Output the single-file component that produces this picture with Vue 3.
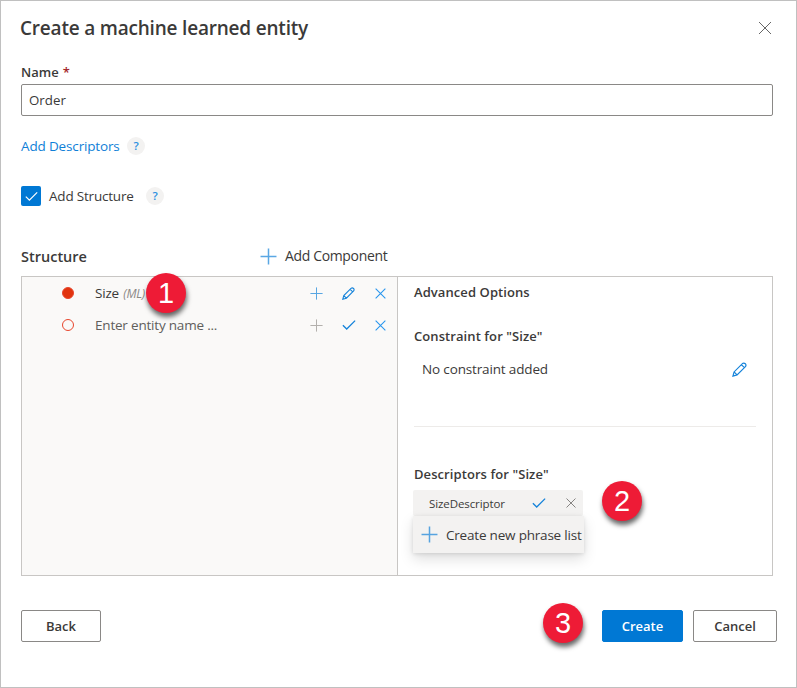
<script setup>
import { ref, h } from 'vue'

const name = ref('Order')
const paths = {
  plus: 'M8 0.5V15.5M0.5 8H15.5',
  close: 'M2 2L14 14M14 2L2 14',
  check: 'M1 8.2L5.4 12.6L15 3',
  edit: 'M1 15L2.2 10.6L11.1 1.7Q12.7 .5 14.2 1.8Q15.5 3.3 14.3 4.9L5.4 13.8ZM10 2.8L13.2 6M2.2 10.6L5.4 13.8',
}
const Icon = (props) =>
  h(
    'svg',
    { viewBox: '0 0 16 16', width: props.size, height: props.size, fill: 'none', stroke: 'currentColor', 'stroke-width': (props.weight * 16) / props.size },
    [h('path', { d: paths[props.name] })],
  )
Icon.props = { name: String, size: { type: Number, default: 12 }, weight: { type: Number, default: 1 } }
</script>

<template>
  <main class="dialog">
    <header class="head">
      <h1 class="title">Create a machine learned entity</h1>
      <button class="ico dark"><Icon name="close" :size="16" :weight="0.9" /></button>
    </header>

    <label class="label" for="entity"><span class="name">Name</span><span class="req">*</span></label>
    <input id="entity" v-model="name" class="field" />

    <div class="line descriptors"><a class="link">Add Descriptors</a><span class="help">?</span></div>
    <div class="line structure-toggle">
      <span class="box"><Icon name="check" :size="13" :weight="1.2" /></span>
      <span class="toggle-text">Add Structure</span><span class="help">?</span>
    </div>

    <div class="line structure-head">
      <h2 class="h2">Structure</h2>
      <Icon class="blue soft" name="plus" :size="17" :weight="1.5" />
      <span class="add-component">Add Component</span>
    </div>

    <section class="panels">
      <div class="tree">
        <div class="row">
          <i class="dot full"></i>
          <span class="row-name"><span class="size">Size</span> <em class="ml">(ML)</em></span>
          <span class="actions">
            <Icon class="blue soft" name="plus" :size="13" /><Icon class="blue" name="edit" :size="13" :weight="1.1" /><Icon class="bright" name="close" :size="13" :weight="1.1" />
          </span>
          <b class="step one">1</b>
        </div>
        <div class="row">
          <i class="dot"></i>
          <span class="row-name hint">Enter entity name ...</span>
          <span class="actions">
            <Icon class="gray" name="plus" :size="13" /><Icon class="blue" name="check" :size="14" :weight="1.3" /><Icon class="bright" name="close" :size="13" :weight="1.1" />
          </span>
        </div>
      </div>
      <div class="options">
        <h3 class="h3 adv">Advanced Options</h3>
        <h3 class="h3 con">Constraint for "Size"</h3>
        <div class="constraint"><span class="none">No constraint added</span><Icon class="blue" name="edit" :size="15" :weight="1.2" /></div>
        <div class="rule"></div>
        <h3 class="h3 desc">Descriptors for "Size"</h3>
        <div class="chip">
          <span class="chip-text">SizeDescriptor</span>
          <Icon class="blue" name="check" :size="14" :weight="1.3" />
          <Icon class="chip-x" name="close" :size="12" :weight="0.9" />
        </div>
        <div class="menu"><Icon class="blue soft" name="plus" :size="17" :weight="1.5" /><span class="menu-text">Create new phrase list</span></div>
        <b class="step two">2</b>
      </div>
    </section>

    <footer class="foot">
      <button class="btn back">Back</button>
      <b class="step three">3</b>
      <button class="btn primary">Create</button>
      <button class="btn cancel">Cancel</button>
    </footer>
  </main>
</template>

<style>
body { margin: 0; background: #fff; }
</style>

<style scoped>
* { box-sizing: border-box; }
svg { display: block; flex: none; }
.dialog { width: 797px; height: 688px; border: 1px solid #c0c0c0; padding: 0 23px 0 20px; font: 14px/20px "Open Sans", "Noto Sans", sans-serif; color: #3b3a39; background: #fff; white-space: nowrap; overflow: hidden; }
h1, h2, h3 { margin: 0; font-weight: 600; }
.head { height: 54px; display: flex; align-items: center; justify-content: space-between; }
.title { margin-left: -1px; font-size: 19px; line-height: 28px; letter-spacing: -.2px; }
.ico { border: 0; padding: 0; background: none; color: #555; }
.label { display: flex; height: 20px; margin-top: 7px; font-size: 13px; font-weight: 600; }
.req { color: #a4262c; margin-left: 4px; }
.field { display: block; width: 752px; height: 32px; margin-top: 2px; padding: 0 7px; border: 1px solid #8a8886; border-radius: 2px; font: 13.3px "Open Sans", sans-serif; color: #3b3a39; outline: 0; }
.line { display: flex; align-items: center; height: 20px; }
.descriptors { margin-top: 20px; }
.link { width: 106px; color: #0f80d7; font-size: 13.5px; letter-spacing: -.15px; }
.help { display: grid; place-items: center; width: 18px; height: 18px; border-radius: 50%; background: #f3f2f1; color: #2b8fe0; font-size: 11.5px; line-height: 18px; font-weight: 600; }
.structure-toggle { margin-top: 30px; }
.box { display: grid; place-items: center; width: 20px; height: 20px; border-radius: 2px; background: #0078d4; color: #fff; }
.toggle-text { width: 97px; margin-left: 8px; font-size: 13.5px; letter-spacing: -.2px; }
.structure-head { margin-top: 40px; }
.h2 { width: 239px; font-size: 14.5px; padding-top: 1px; }
.add-component { margin-left: 8px; font-size: 14px; letter-spacing: -.35px; }
.blue { color: #1583da; }
.bright { color: #2b97ee; }
.soft { opacity: .7; }
.gray { color: #b3b0ad; }
.panels { display: flex; width: 752px; height: 300px; margin-top: 10px; border: 1px solid #c8c6c4; }
.tree { width: 376px; border-right: 1px solid #c8c6c4; background: #faf9f8; }
.row { position: relative; display: flex; align-items: center; height: 32px; padding-left: 40px; }
.dot { width: 12px; height: 12px; border: 1px solid #e8452c; border-radius: 50%; }
.full { background: #e1330f; }
.row-name { width: 194px; margin-left: 21px; font-size: 13.5px; letter-spacing: -.2px; }
.hint { color: #605e5c; }
.ml { margin-left: 1px; font-size: 12px; color: #8a8886; }
.actions { display: grid; grid-template-columns: repeat(3, 13px); align-items: center; gap: 19px; margin-left: 21px; }
.options { position: relative; width: 374px; padding: 5px 16px 0; }
.h3 { height: 20px; font-size: 13px; letter-spacing: .08px; }
.con { margin-top: 24px; }
.constraint { display: flex; align-items: center; justify-content: space-between; height: 20px; margin-top: 13px; padding: 0 9px 0 8px; }
.none { font-size: 13.5px; letter-spacing: -.15px; }
.rule { height: 1px; margin-top: 47px; background: #edebe9; }
.desc { margin-top: 37px; }
.chip { display: flex; align-items: center; width: 170px; height: 26px; margin: 6px 0 0 -1px; padding-left: 16px; border-radius: 2px; background: #f3f2f1; }
.chip-text { width: 103px; padding-top: 1px; font-size: 11.5px; letter-spacing: -.1px; }
.chip-x { margin-left: 19px; color: #797775; }
.menu { display: flex; align-items: center; width: 171px; height: 37px; padding-left: 8px; margin-left: -1px; background: #f3f2f1; box-shadow: 0 6px 14px rgba(0, 0, 0, .13), 0 1px 4px rgba(0, 0, 0, .11); }
.menu-text { margin-left: 8px; font-size: 13.5px; letter-spacing: -.2px; }
.step { display: grid; place-items: center; width: 40px; height: 40px; border-radius: 50%; background: #ee1b36; color: #fff; font: 29px/40px "Liberation Sans", sans-serif; box-shadow: 1px 4px 5px rgba(0, 0, 0, .6); }
.one { position: absolute; left: 124px; top: -4px; z-index: 2; }
.two { position: absolute; left: 204px; top: 204px; }
.foot { display: flex; align-items: center; width: 756px; height: 32px; margin-top: 34px; }
.btn { height: 32px; padding: 0; border: 1px solid #8a8886; border-radius: 2px; background: #fff; color: #3b3a39; font: 600 13px "Open Sans", sans-serif; }
.back { width: 80px; }
.three { margin: -6px 19px 0 442px; }
.btn.primary { width: 81px; border-color: #0078d4; background: #0078d4; color: #fff; }
.cancel { width: 84px; margin-left: 10px; }
</style>
